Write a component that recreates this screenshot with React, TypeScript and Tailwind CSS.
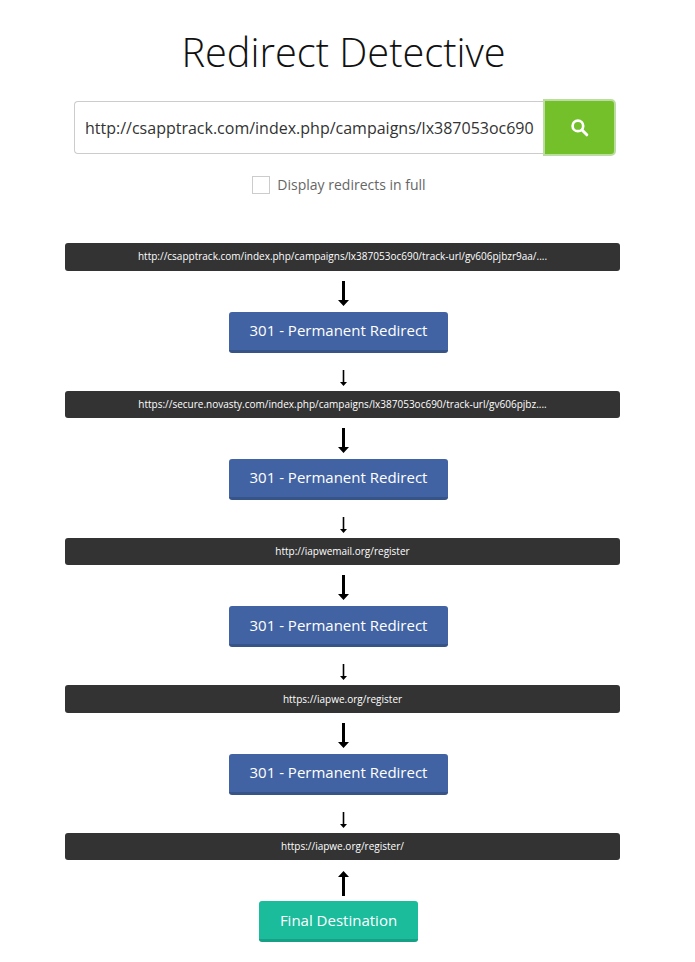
const hops = [
  'http://csapptrack.com/index.php/campaigns/lx387053oc690/track-url/gv606pjbzr9aa/....',
  'https://secure.novasty.com/index.php/campaigns/lx387053oc690/track-url/gv606pjbz....',
  'http://iapwemail.org/register',
  'https://iapwe.org/register',
]

function BigArrow({ up = false }: { up?: boolean }) {
  return (
    <svg width="11" height="25" viewBox="0 0 11 25" className={up ? 'rotate-180' : ''}>
      <path d="M4 0h3v19h4l-5.5 6L0 19h4z" fill="#000" />
    </svg>
  )
}

function SmallArrow() {
  return (
    <svg width="7" height="16" viewBox="0 0 7 16">
      <path d="M2.7 0h1.6v12H7l-3.5 4L0 12h2.7z" fill="#000" />
    </svg>
  )
}

function SearchIcon() {
  return (
    <svg width="18" height="18" viewBox="0 0 18 18">
      <circle cx="6.9" cy="6.9" r="5.3" fill="none" stroke="#fff" strokeWidth="2.7" />
      <path d="M11 11 15.8 15.8" fill="none" stroke="#fff" strokeWidth="3" strokeLinecap="round" />
    </svg>
  )
}

function UrlBar({ url }: { url: string }) {
  return (
    <div className="w-[555px] h-[27.5px] shrink-0 rounded-[3px] bg-[#333333] flex items-center justify-center text-[10px] text-white">
      {url}
    </div>
  )
}

function StatusButton() {
  return (
    <div className="w-[219px] h-[41px] ml-[-8px] pb-[0.5px] shrink-0 rounded-[3px] bg-[#4263a3] border-b-[3px] border-[#375489] flex items-center justify-center text-[15px] text-white">
      301 - Permanent Redirect
    </div>
  )
}

export default function App() {
  return (
    <div className="w-[695px] h-[962px] bg-white overflow-hidden">
      <div
        className="w-[685px] flex flex-col items-center"
        style={{ fontFamily: '"Open Sans", sans-serif' }}
      >
        <h1 className="mt-[22px] h-[60px] ml-[2px] text-[39.75px] leading-[60px] font-light text-[#111111]">
          Redirect Detective
        </h1>

        <div className="mt-[17px] w-[542px] h-[57px] ml-[5px] flex items-center">
          <div className="grow h-[53px] pl-[10px] rounded-l-[4px] border border-r-0 border-[#cccccc] flex items-center text-base text-[#333333] whitespace-nowrap">
            http://csapptrack.com/index.php/campaigns/lx387053oc690
          </div>
          <button className="w-[73px] h-[57px] rounded-r-[5px] bg-[#73c02b] border-2 border-[#bcdda0] flex items-center justify-center">
            <SearchIcon />
          </button>
        </div>

        <div className="mt-[20px] ml-[-7px] h-[18px] flex items-center gap-[7px]">
          <span className="w-[18px] h-[18px] border border-[#cccccc]" />
          <span className="text-sm text-[#666666]">Display redirects in full</span>
        </div>

        <div className="mt-[49.2px] flex flex-col items-center">
          {hops.map((url) => (
            <div key={url} className="flex flex-col items-center">
              <UrlBar url={url} />
              <div className="h-[40.9px] pt-[10px] ml-[2px] flex justify-center">
                <BigArrow />
              </div>
              <StatusButton />
              <div className="h-[38px] pt-[17px] ml-[2px] flex justify-center">
                <SmallArrow />
              </div>
            </div>
          ))}
          <UrlBar url="https://iapwe.org/register/" />
          <div className="h-[40.9px] pt-[11px] ml-[2px] flex justify-center">
            <BigArrow up />
          </div>
          <div className="w-[159px] h-[41px] ml-[-8px] rounded-[3px] bg-[#1abc9c] border-b-[3px] border-[#16a085] flex items-center justify-center text-[15px] text-white">
            Final Destination
          </div>
        </div>
      </div>
    </div>
  )
}
